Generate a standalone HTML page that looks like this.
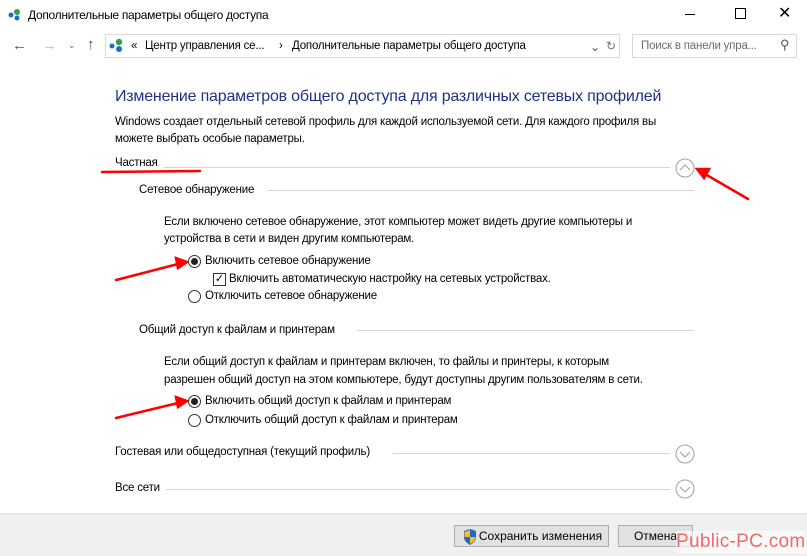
<!DOCTYPE html>
<html><head><meta charset="utf-8"><style>
body{margin:0;width:807px;height:555px;background:#fff;position:relative;overflow:hidden;font-family:"Liberation Sans",sans-serif;font-size:12px;color:#000}
.a{position:absolute;white-space:nowrap}
.ln{position:absolute;height:1px;background:#d5d5d5}
.t{font-size:11.5px;letter-spacing:-0.2px}
.rad{position:absolute;width:11px;height:11px;border:1px solid #333;border-radius:50%;background:#fff}
.rad.on::after{content:"";position:absolute;left:2px;top:2px;width:7px;height:7px;border-radius:50%;background:#222}
.btn{position:absolute;background:#e1e1e1;border:1px solid #adadad;box-sizing:border-box;font-size:12px;text-align:center;line-height:20px}
</style></head><body>
<svg class="a" style="left:8px;top:8px" width="14" height="14"><circle cx="3" cy="7" r="2.5" fill="#1b6ec2"/><circle cx="9" cy="4" r="3" fill="#2aa14b"/><circle cx="9" cy="10" r="2.5" fill="#1b6ec2"/></svg>
<div class="a" style="left:28px;top:8px;font-size:12px;letter-spacing:-0.3px">Дополнительные параметры общего доступа</div>
<div class="a" style="left:685px;top:14px;width:10px;height:1px;background:#000"></div>
<div class="a" style="left:735px;top:8px;width:9px;height:9px;border:1px solid #000"></div>
<div class="a" style="left:778px;top:3px;font-size:16px">✕</div>
<div class="a" style="left:12px;top:37px;font-size:15px;color:#555">←</div>
<div class="a" style="left:42px;top:37px;font-size:15px;color:#bbb">→</div>
<div class="a" style="left:68px;top:40px;font-size:9px;color:#666">⌄</div>
<div class="a" style="left:87px;top:36px;font-size:15px;color:#555">↑</div>
<div class="a" style="left:105px;top:34px;width:515px;height:24px;border:1px solid #d9d9d9;box-sizing:border-box"></div>
<svg class="a" style="left:109px;top:38px" width="16" height="16"><circle cx="3" cy="8" r="2.5" fill="#1b6ec2"/><circle cx="10" cy="4" r="3.2" fill="#2aa14b"/><circle cx="10" cy="11" r="3" fill="#1b6ec2"/></svg>
<div class="a t" style="left:131px;top:40px">«</div>
<div class="a t" style="left:145px;top:40px">Центр управления се...</div>
<div class="a t" style="left:279px;top:40px">›</div>
<div class="a t" style="left:292px;top:40px">Дополнительные параметры общего доступа</div>
<div class="a" style="left:590px;top:40px;color:#555">⌄</div>
<div class="a" style="left:606px;top:39px;color:#777">↻</div>
<div class="a" style="left:632px;top:34px;width:165px;height:24px;border:1px solid #d9d9d9;box-sizing:border-box"></div>
<div class="a t" style="left:641px;top:40px;color:#6d6d6d">Поиск в панели упра...</div>
<div class="a" style="left:780px;top:37px;color:#555;font-size:13px">⚲</div>
<div class="a" style="left:115px;top:88px;font-size:16px;color:#1e3287;letter-spacing:-0.2px">Изменение параметров общего доступа для различных сетевых профилей</div>
<div class="a t" style="left:115px;top:114px;line-height:17px">Windows создает отдельный сетевой профиль для каждой используемой сети. Для каждого профиля вы<br>можете выбрать особые параметры.</div>
<div class="a t" style="left:115px;top:157px">Частная</div>
<div class="ln" style="left:163px;top:167px;width:507px"></div>
<div class="a t" style="left:139px;top:184px">Сетевое обнаружение</div>
<div class="ln" style="left:268px;top:190px;width:426px"></div>
<div class="a t" style="left:164px;top:214px;line-height:17px">Если включено сетевое обнаружение, этот компьютер может видеть другие компьютеры и<br>устройства в сети и виден другим компьютерам.</div>
<div class="rad on" style="left:188px;top:255px"></div>
<div class="a t" style="left:205px;top:255px">Включить сетевое обнаружение</div>
<div class="a" style="left:213px;top:273px;width:11px;height:11px;border:1px solid #333;font-size:11px;line-height:11px;text-align:center">✓</div>
<div class="a t" style="left:229px;top:273px">Включить автоматическую настройку на сетевых устройствах.</div>
<div class="rad" style="left:188px;top:290px"></div>
<div class="a t" style="left:205px;top:290px">Отключить сетевое обнаружение</div>
<div class="a t" style="left:139px;top:324px">Общий доступ к файлам и принтерам</div>
<div class="ln" style="left:357px;top:330px;width:337px"></div>
<div class="a t" style="left:164px;top:353px;line-height:18px">Если общий доступ к файлам и принтерам включен, то файлы и принтеры, к которым<br>разрешен общий доступ на этом компьютере, будут доступны другим пользователям в сети.</div>
<div class="rad on" style="left:188px;top:395px"></div>
<div class="a t" style="left:205px;top:395px">Включить общий доступ к файлам и принтерам</div>
<div class="rad" style="left:188px;top:414px"></div>
<div class="a t" style="left:205px;top:414px">Отключить общий доступ к файлам и принтерам</div>
<div class="a t" style="left:115px;top:446px">Гостевая или общедоступная (текущий профиль)</div>
<div class="ln" style="left:393px;top:453px;width:277px"></div>
<div class="a t" style="left:115px;top:482px">Все сети</div>
<div class="ln" style="left:166px;top:489px;width:504px"></div>
<svg class="a" style="left:0;top:0" width="807" height="555">
<g fill="none" stroke="#a0a0a0" stroke-width="1"><circle cx="685" cy="168" r="9"/><path d="M680 170l5-5 5 5"/><circle cx="685" cy="454" r="9"/><path d="M680 452l5 5 5-5"/><circle cx="685" cy="489" r="9"/><path d="M680 487l5 5 5-5"/></g>
<g stroke="#f00" stroke-width="2.5" fill="#f00" stroke-linecap="round">
<path d="M102 172L200 171" fill="none"/>
<path d="M748 199L705 174" fill="none"/><path d="M697 169l12 0-5 9z"/>
<path d="M116 280L178 264" fill="none"/><path d="M187 262l-11 -4 2 10z"/>
<path d="M116 418L178 403" fill="none"/><path d="M187 401l-11 -4 2 10z"/>
</g></svg>
<div class="a" style="left:0;top:513px;width:807px;height:42px;background:#f0f0f0;border-top:1px solid #dfdfdf"></div>
<div class="btn" style="left:454px;top:525px;width:155px;height:22px">
<svg style="position:absolute;left:8px;top:3px" width="14" height="16"><path d="M7 0L13 2V8C13 12 10 14 7 16C4 14 1 12 1 8V2Z" fill="#2b63c6"/><path d="M7 1V8H1.5V3Z M7 8H12.5C12.3 11.5 10 13.5 7 15Z" fill="#f4c21c"/></svg>
<span style="padding-left:18px">Сохранить изменения</span></div>
<div class="btn" style="left:618px;top:525px;width:75px;height:22px">Отмена</div>
<div class="a" style="left:676px;top:531px;font-size:19px;color:#f06a6a;background:rgba(255,255,255,0.6);letter-spacing:0.3px">Public-PC.com</div>
</body></html>
